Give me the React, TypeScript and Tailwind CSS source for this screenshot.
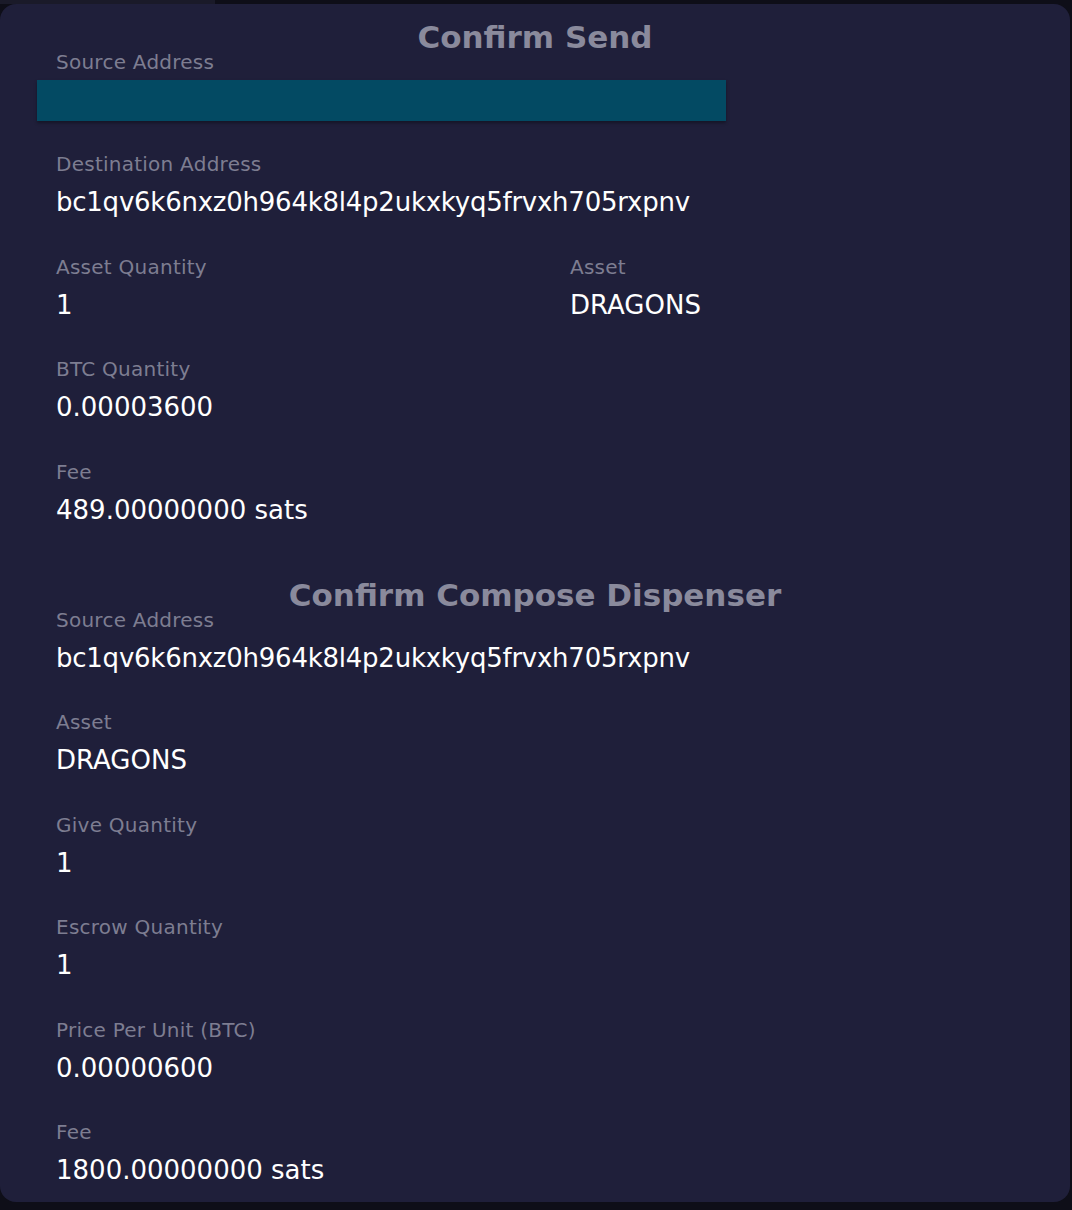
import React from "react";

const font = { fontFamily: '"DejaVu Sans", "Liberation Sans", sans-serif' };

function Label({ children }: { children: React.ReactNode }) {
  return <div className="text-[20px] leading-[24px] tracking-[0.25px] text-[#7d7d91]">{children}</div>;
}

function Field({ label, value, tight }: { label: string; value: string; tight?: boolean }) {
  return (
    <div className="flex flex-col pb-[36.5px]">
      <Label>{label}</Label>
      <div className={`mt-[10px] text-[26px] leading-[32px] text-white ${tight ? "tracking-[-0.24px]" : ""}`}>{value}</div>
    </div>
  );
}

function Title({ children }: { children: React.ReactNode }) {
  return (
    <div className="text-center text-[31px] leading-[26px] font-bold text-[#8a8a9c]">{children}</div>
  );
}

export default function App() {
  return (
    <div className="min-h-[1210px] w-[1072px] bg-[#0e0e18]" style={font}>
      <div className="flex h-[4px]">
        <div className="w-[215px] bg-[#1a1a29]" />
      </div>
      <div className="w-[1070px] rounded-2xl bg-[#1f1f3a] pt-[20px] pb-[16px]">
        <Title>Confirm Send</Title>
        <div className="px-[56px]">
          <Label>Source Address</Label>
        </div>
        <div className="mt-[6px] ml-[37px] h-[41px] w-[689px] bg-[#034a63] shadow-[0_2px_3px_rgba(0,0,0,0.35)]" />
        <div className="px-[56px] pt-[31px]">
          <Field label="Destination Address" value="bc1qv6k6nxz0h964k8l4p2ukxkyq5frvxh705rxpnv" tight />
          <div className="grid grid-cols-[514px_1fr]">
            <Field label="Asset Quantity" value="1" />
            <Field label="Asset" value="DRAGONS" />
          </div>
          <Field label="BTC Quantity" value="0.00003600" />
          <div className="flex flex-col">
            <Label>Fee</Label>
            <div className="mt-[10px] text-[26px] leading-[32px] text-white">489.00000000 sats</div>
          </div>
        </div>
        <div className="pt-[56px]">
          <Title>Confirm Compose Dispenser</Title>
        </div>
        <div className="px-[56px]">
          <Field label="Source Address" value="bc1qv6k6nxz0h964k8l4p2ukxkyq5frvxh705rxpnv" tight />
          <Field label="Asset" value="DRAGONS" />
          <Field label="Give Quantity" value="1" />
          <Field label="Escrow Quantity" value="1" />
          <Field label="Price Per Unit (BTC)" value="0.00000600" />
          <div className="flex flex-col">
            <Label>Fee</Label>
            <div className="mt-[10px] text-[26px] leading-[32px] text-white">1800.00000000 sats</div>
          </div>
        </div>
      </div>
    </div>
  );
}
